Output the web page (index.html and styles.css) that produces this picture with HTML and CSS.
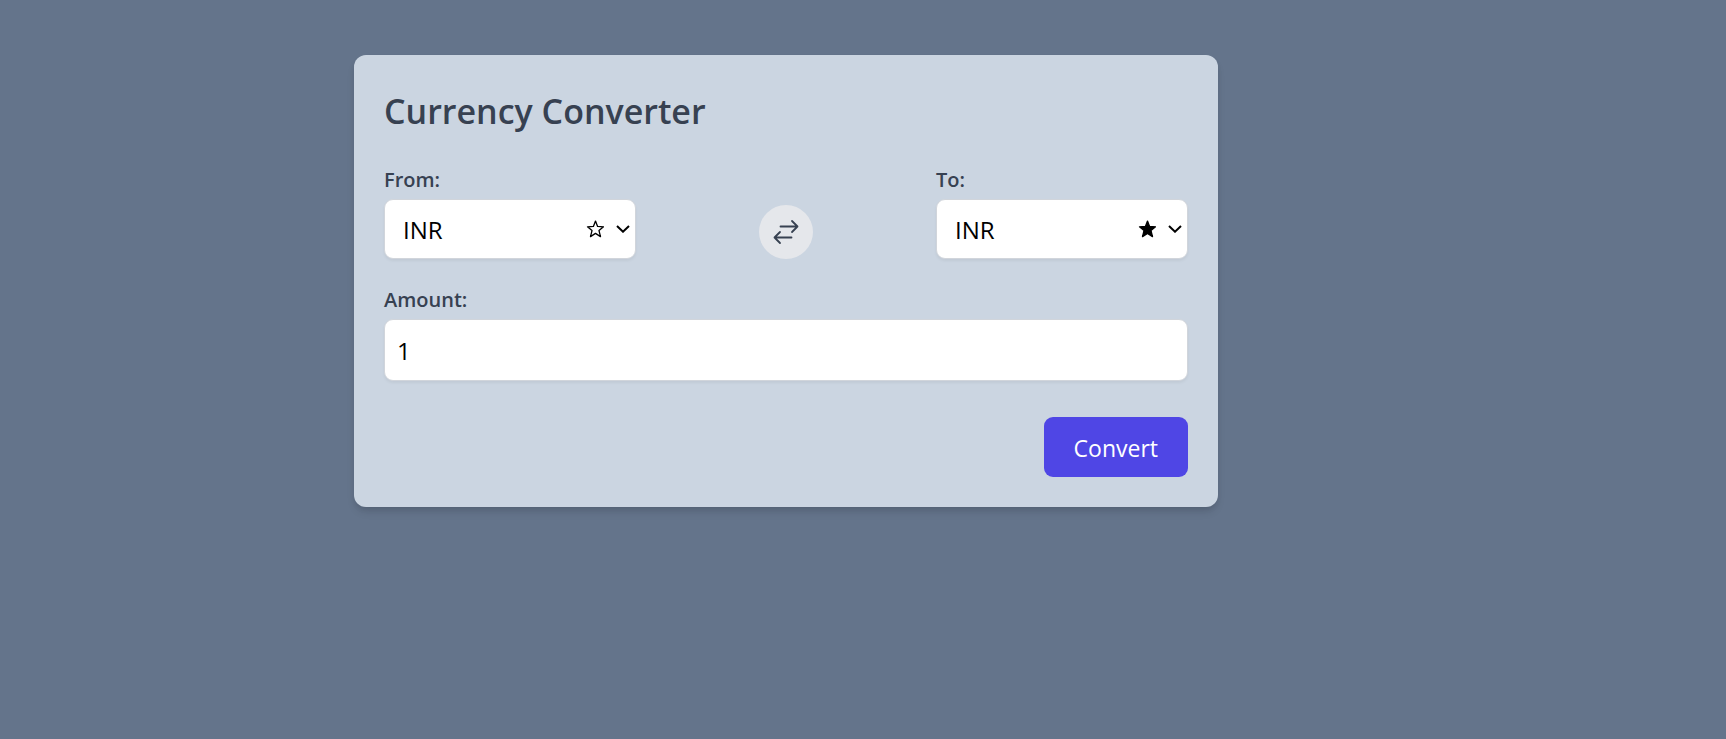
FILE: index.html
```html
<!DOCTYPE html>
<html lang="en">
<head>
  <meta charset="utf-8">
  <meta name="viewport" content="width=device-width, initial-scale=1">
  <title>Currency Converter</title>
  <link rel="stylesheet" href="styles.css">
</head>
<body>
  <main class="page">
    <form class="card">
      <h1 class="title">Currency Converter</h1>
      <div class="currencies">
        <div class="field">
          <label class="label" for="from">From:</label>
          <div class="picker">
            <select class="control select" id="from"><option>INR</option></select>
            <button class="favorite" type="button" aria-label="Add to favorites">
              <svg class="star" viewBox="0 0 18 18" fill="none" stroke="currentColor" stroke-width="1.3" stroke-linejoin="round"><path d="M9.500 1.100l2.100 5.300 5.900.4-4.500 3.800 1.500 6-5-3.200-5 3.200 1.500-6L1.500 6.800l5.900-.4z"/></svg>
            </button>
            <svg class="chevron" viewBox="0 0 14 8" fill="none" stroke="currentColor" stroke-width="2"><path d="M1 1l6 5.700L13 1"/></svg>
          </div>
        </div>
        <button class="swap" type="button" aria-label="Swap currencies">
          <svg class="swap-icon" viewBox="0 0 26 26" fill="none" stroke="currentColor" stroke-width="1.800" stroke-linecap="round" stroke-linejoin="round"><path d="M7.500 7.500h17M19 2l5.500 5.500L19 13M18.500 18.500h-17M7 13l-5.500 5.500L7 24"/></svg>
        </button>
        <div class="field">
          <label class="label" for="to">To:</label>
          <div class="picker">
            <select class="control select" id="to"><option>INR</option></select>
            <button class="favorite" type="button" aria-label="Remove from favorites">
              <svg class="star" viewBox="0 0 18 18" fill="currentColor" stroke="currentColor" stroke-width="1.3" stroke-linejoin="round"><path d="M9.500 1.100l2.100 5.300 5.900.4-4.500 3.800 1.500 6-5-3.200-5 3.200 1.500-6L1.500 6.800l5.900-.4z"/></svg>
            </button>
            <svg class="chevron" viewBox="0 0 14 8" fill="none" stroke="currentColor" stroke-width="2"><path d="M1 1l6 5.700L13 1"/></svg>
          </div>
        </div>
      </div>
      <div class="field">
        <label class="label" for="amount">Amount:</label>
        <input class="control amount" id="amount" type="number" value="1">
      </div>
      <div class="actions">
        <button class="convert" type="button">Convert</button>
      </div>
    </form>
  </main>
</body>
</html>
```
FILE: styles.css
```css
*,
*::before,
*::after {
  box-sizing: border-box;
}

body {
  margin: 0;
  min-height: 100vh;
  background: #64748b;
  color: #374151;
  font-family: "Segoe UI", "Open Sans", "Noto Sans", sans-serif;
}

button,
input,
select {
  font: inherit;
}

.page {
  max-width: 1572px;
  padding: 55px 24px;
}

.card {
  display: flex;
  flex-direction: column;
  gap: 24px;
  max-width: 864px;
  margin: 0 auto;
  padding: 30px;
  border-radius: 12px;
  background: #cbd5e1;
  box-shadow: 0 6px 9px -1px rgb(0 0 0 / 0.1), 0 3px 6px -2px rgb(0 0 0 / 0.1);
}

.title {
  margin: 0;
  padding-bottom: 2px;
  font-size: 34px;
  line-height: 52px;
  font-weight: 600;
}

.currencies {
  display: grid;
  grid-template-columns: repeat(3, 1fr);
  gap: 24px;
  align-items: end;
}

.field {
  display: flex;
  flex-direction: column;
  gap: 2px;
}

.label {
  font-size: 20px;
  line-height: 34px;
  font-weight: 600;
}

.picker {
  position: relative;
}

.control {
  display: block;
  width: 100%;
  border: 1px solid #d1d5db;
  border-radius: 9px;
  background: #fff;
  color: #000;
  font-size: 24px;
  line-height: 36px;
  box-shadow: 0 2px 3px rgb(0 0 0 / 0.05);
  appearance: none;
}

.select {
  height: 60px;
  padding: 2px 72px 0 18px;
}

.amount {
  height: 62px;
  padding: 0 12px;
  appearance: textfield;
}

.amount::-webkit-inner-spin-button {
  appearance: none;
}

.favorite {
  position: absolute;
  top: 21px;
  right: 32px;
  padding: 0;
  border: 0;
  background: none;
  color: #000;
}

.star {
  display: block;
  width: 18px;
  height: 18px;
}

.chevron {
  position: absolute;
  top: 26px;
  right: 6px;
  width: 14px;
  height: 8px;
  color: #000;
  pointer-events: none;
}

.swap {
  display: flex;
  align-items: center;
  justify-content: center;
  justify-self: center;
  width: 54px;
  height: 54px;
  padding: 0;
  border: 0;
  border-radius: 50%;
  background: #e5e7eb;
  color: #374151;
}

.swap-icon {
  width: 26px;
  height: 26px;
}

.actions {
  display: flex;
  justify-content: flex-end;
  padding-top: 12px;
}

.convert {
  padding: 13px 30px 11px;
  border: 0;
  border-radius: 9px;
  background: #4f46e5;
  color: #fff;
  font-size: 23px;
  line-height: 36px;
}
```
